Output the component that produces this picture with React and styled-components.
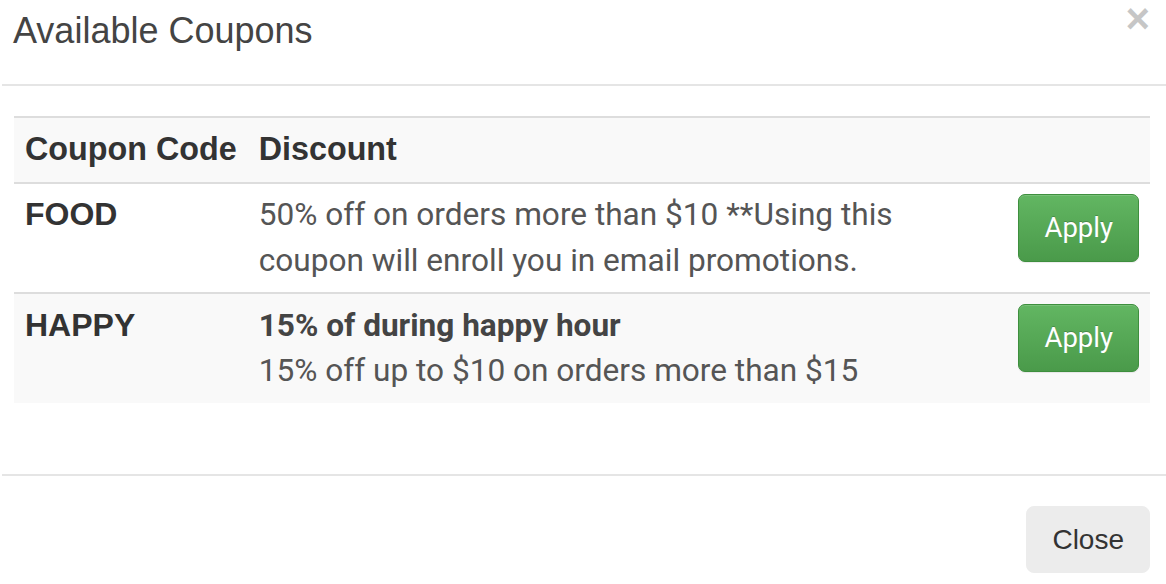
import React from "react";
import styled, { createGlobalStyle } from "styled-components";

const GlobalStyle = createGlobalStyle`
  html, body {
    margin: 0;
    padding: 0;
    background: #fff;
  }
  body {
    font-family: "Liberation Sans", Arial, sans-serif;
    color: #333;
  }
`;

const coupons = [
  {
    code: "FOOD",
    description:
      "50% off on orders more than $10 **Using this coupon will enroll you in email promotions."
  },
  {
    code: "HAPPY",
    title: "15% of during happy hour",
    description: "15% off up to $10 on orders more than $15"
  }
];

const App = () => (
  <>
    <GlobalStyle />
    <Modal>
      <Header>
        <Title>Available Coupons</Title>
        <CloseX type="button" aria-label="Close">
          ×
        </CloseX>
      </Header>

      <Body>
        <Table>
          <thead>
            <Row striped>
              <HeadCell>Coupon Code</HeadCell>
              <HeadCell>Discount</HeadCell>
              <HeadCell />
            </Row>
          </thead>
          <tbody>
            {coupons.map(({ code, title, description }, i) => (
              <Row key={code} striped={i % 2 === 1}>
                <CodeCell>{code}</CodeCell>
                <Cell>
                  {title && <DealTitle>{title}</DealTitle>}
                  <div>{description}</div>
                </Cell>
                <ButtonCell>
                  <ApplyButton type="button">Apply</ApplyButton>
                </ButtonCell>
              </Row>
            ))}
          </tbody>
        </Table>
      </Body>

      <Footer>
        <DefaultButton type="button">Close</DefaultButton>
      </Footer>
    </Modal>
  </>
);

const Modal = styled.div`
  width: 1164px;
  margin-left: 2px;
  background: #fff;
`;

const Header = styled.div`
  display: flex;
  justify-content: space-between;
  align-items: flex-start;
  padding: 11px 16px 33px 11px;
  border-bottom: 2px solid #e5e5e5;
`;

const Title = styled.h4`
  margin: 0;
  font-family: "Liberation Sans", Arial, sans-serif;
  font-size: 36px;
  font-weight: 400;
  line-height: 40px;
  color: #444;
`;

const CloseX = styled.button`
  margin-top: -11px;
  padding: 0;
  border: 0;
  background: transparent;
  font-family: "Liberation Sans", Arial, sans-serif;
  font-size: 42px;
  font-weight: 700;
  line-height: 38px;
  color: #000;
  opacity: 0.22;
  text-shadow: 0 1px 0 #fff;
  cursor: pointer;
`;

const Body = styled.div`
  padding: 30px 16px 71px 12px;
`;

const Table = styled.table`
  width: 100%;
  border-collapse: collapse;
  border-spacing: 0;
  border-top: 2px solid #ddd;
`;

const Row = styled.tr`
  background: ${props => (props.striped ? "#f9f9f9" : "#fff")};
  border-bottom: 2px solid #ddd;

  tbody &:last-child {
    border-bottom: 0;
  }
`;

const HeadCell = styled.th`
  padding: 9px 11px;
  text-align: left;
  vertical-align: bottom;
  white-space: nowrap;
  font-family: "Liberation Sans", Arial, sans-serif;
  font-size: 32.3px;
  font-weight: 700;
  line-height: 45.7px;
  color: #333;

  &:first-child,
  &:last-child {
    width: 1px;
  }
`;

const Cell = styled.td`
  padding: 8.5px 11px;
  vertical-align: top;
  font-family: Roboto, "Liberation Sans", sans-serif;
  font-size: 31.6px;
  line-height: 45.7px;
  color: #555;
`;

const CodeCell = styled(Cell)`
  width: 1px;
  white-space: nowrap;
  font-family: "Liberation Sans", Arial, sans-serif;
  font-size: 32px;
  font-weight: 700;
  color: #333;
`;

const ButtonCell = styled(Cell)`
  width: 1px;
  padding-top: 10px;
`;

const DealTitle = styled.div`
  font-weight: 700;
  color: #444;
`;

const ApplyButton = styled.button`
  display: block;
  padding: 12px 25px;
  border: 1px solid #3e8f3e;
  border-radius: 7px;
  background-image: linear-gradient(to bottom, #62b662 0%, #4a9a4a 100%);
  box-shadow: inset 0 1px 0 rgba(255, 255, 255, 0.15),
    0 1px 1px rgba(0, 0, 0, 0.075);
  font-family: Roboto, "Liberation Sans", sans-serif;
  font-size: 27.5px;
  line-height: 42px;
  color: #fff;
  text-shadow: 0 -1px 0 rgba(0, 0, 0, 0.2);
  white-space: nowrap;
  cursor: pointer;
`;

const Footer = styled.div`
  display: flex;
  justify-content: flex-end;
  padding: 30px 16px 11px;
  border-top: 2px solid #e5e5e5;
`;

const DefaultButton = styled.button`
  padding: 12px 25px;
  border: 1px solid #ececec;
  border-radius: 8px;
  background: #ececec;
  font-family: "Liberation Sans", Arial, sans-serif;
  font-size: 28px;
  line-height: 41px;
  color: #333;
  cursor: pointer;
`;

export default App;
